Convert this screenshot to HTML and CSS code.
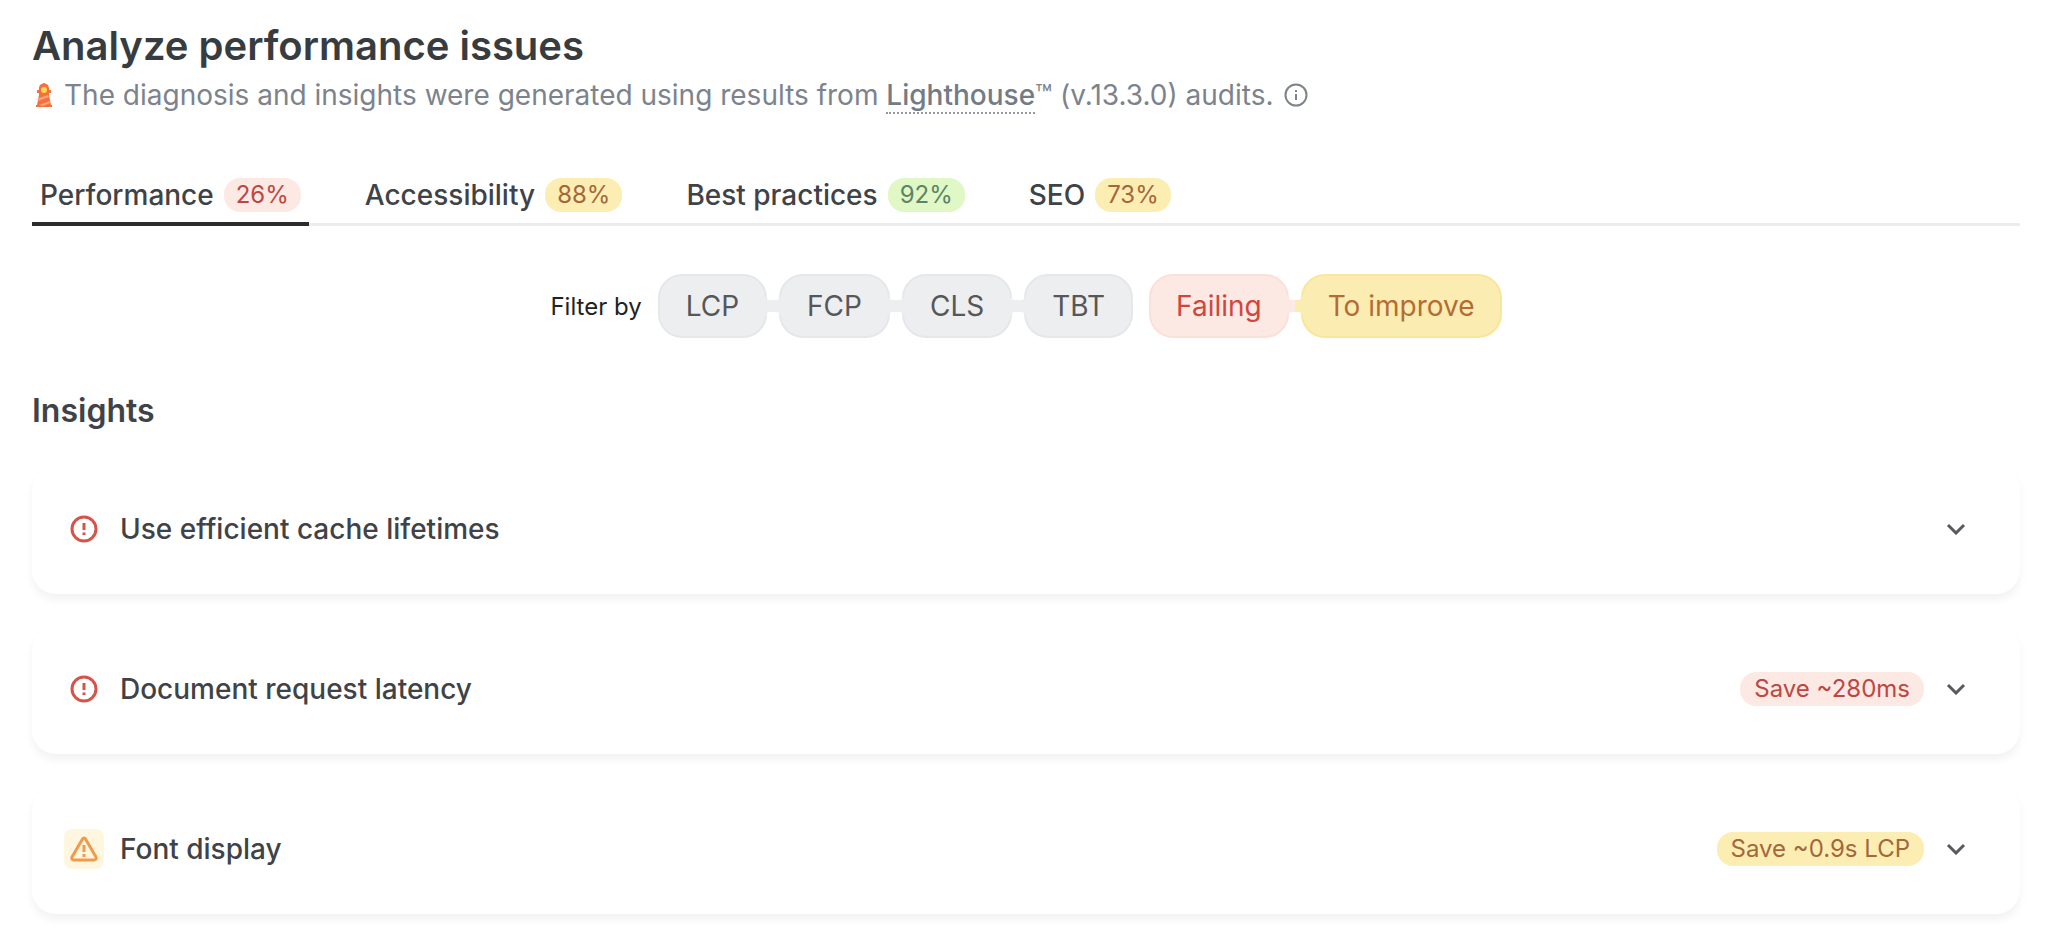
FILE: index.html
```html
<!DOCTYPE html>
<html lang="en">
<head>
  <meta charset="utf-8">
  <meta name="viewport" content="width=device-width, initial-scale=1.0">
  <title>Analyze performance issues</title>
  <link rel="stylesheet" href="styles.css">
</head>
<body>
  <main>
    <h1>Analyze performance issues</h1>
    <div class="intro">
      <svg class="lighthouse" width="20" height="26" viewBox="0 0 18 26" aria-hidden="true">
        <path fill="#f4703d" d="M9 1c4 1 5 3 5 6v1h2v3h-2v2l2 10h1v2H1v-2h1l2-10v-2H2V8h2V7c0-3 1-5 5-6z"/>
        <circle cx="9" cy="8" r="3" fill="#ffd84f"/>
        <path fill="#ffa27c" d="M4 16l9-3 1 2-11 4zM4 23l11-4v2l-7 3z"/>
      </svg>
      <span>The diagnosis and insights were generated using results from <a href="#">Lighthouse</a>™ (v.13.3.0) audits.</span>
      <button class="info" aria-label="More information">
        <svg width="24" height="24" viewBox="0 0 24 24" fill="none" stroke="currentColor" stroke-width="2">
          <circle cx="12" cy="12" r="10.5"/>
          <path d="M12 11v6M12 7v2"/>
        </svg>
      </button>
    </div>

    <div class="tabs" role="tablist">
      <button class="tab active" role="tab" aria-selected="true">Performance <span class="badge red">26%</span></button>
      <button class="tab" role="tab" aria-selected="false">Accessibility <span class="badge yellow">88%</span></button>
      <button class="tab" role="tab" aria-selected="false">Best practices <span class="badge green">92%</span></button>
      <button class="tab" role="tab" aria-selected="false">SEO <span class="badge yellow">73%</span></button>
    </div>

    <div class="filters">
      <span class="filter-label">Filter by</span>
      <div class="chips">
        <button class="chip">LCP</button>
        <svg class="link" width="16" height="22" viewBox="0 0 16 22"><path d="M0 0C1 4 3 5 6 5h4c3 0 5-1 6-5v22c-1-4-3-5-6-5H6c-3 0-5 1-6 5z"/></svg>
        <button class="chip">FCP</button>
        <svg class="link" width="16" height="22" viewBox="0 0 16 22"><path d="M0 0C1 4 3 5 6 5h4c3 0 5-1 6-5v22c-1-4-3-5-6-5H6c-3 0-5 1-6 5z"/></svg>
        <button class="chip">CLS</button>
        <svg class="link" width="16" height="22" viewBox="0 0 16 22"><path d="M0 0C1 4 3 5 6 5h4c3 0 5-1 6-5v22c-1-4-3-5-6-5H6c-3 0-5 1-6 5z"/></svg>
        <button class="chip">TBT</button>
      </div>
      <div class="chips">
        <button class="chip failing">Failing</button>
        <svg class="link" width="16" height="22" viewBox="0 0 16 22">
          <path class="link-failing" d="M0 0C1 4 3 5 6 5h2v12H6c-3 0-5 1-6 5z"/>
          <path class="link-improve" d="M16 0c-1 4-3 5-6 5H8v12h2c3 0 5 1 6 5z"/>
        </svg>
        <button class="chip improve">To improve</button>
      </div>
    </div>

    <h2>Insights</h2>
    <div class="cards">
      <button class="card" aria-expanded="false">
        <span class="status error">
          <svg width="28" height="28" viewBox="0 0 28 28" fill="none" stroke="currentColor" stroke-width="3">
            <circle cx="14" cy="14" r="12"/>
            <path d="M14 8v7M14 17.5v2.5"/>
          </svg>
        </span>
        <span class="name">Use efficient cache lifetimes</span>
        <svg class="chevron" width="20" height="12" viewBox="0 0 20 12"><path d="M2 2l8 8 8-8"/></svg>
      </button>
      <button class="card" aria-expanded="false">
        <span class="status error">
          <svg width="28" height="28" viewBox="0 0 28 28" fill="none" stroke="currentColor" stroke-width="3">
            <circle cx="14" cy="14" r="12"/>
            <path d="M14 8v7M14 17.5v2.5"/>
          </svg>
        </span>
        <span class="name">Document request latency</span>
        <span class="badge save red">Save ~280ms</span>
        <svg class="chevron" width="20" height="12" viewBox="0 0 20 12"><path d="M2 2l8 8 8-8"/></svg>
      </button>
      <button class="card" aria-expanded="false">
        <span class="status warning">
          <svg width="28" height="28" viewBox="0 0 28 28" fill="none" stroke="currentColor" stroke-width="3" stroke-linejoin="round">
            <path d="M12.5 4q1.5-2 3 0L26 22q.8 3-2 3H4q-2.800 0-2-3z"/>
            <path d="M14 10v7M14 19v3"/>
          </svg>
        </span>
        <span class="name">Font display</span>
        <span class="badge save yellow">Save ~0.9s LCP</span>
        <svg class="chevron" width="20" height="12" viewBox="0 0 20 12"><path d="M2 2l8 8 8-8"/></svg>
      </button>
    </div>
  </main>
</body>
</html>
```
FILE: styles.css
```css
* {
  box-sizing: border-box;
}

body {
  margin: 0;
  background: #fff;
  color: #3f4347;
  font-family: Inter, sans-serif;
  font-size: 28px;
}

main {
  padding: 22px 32px 12px;
}

button {
  margin: 0;
  padding: 0;
  border: 0;
  background: none;
  color: inherit;
  font: inherit;
  cursor: pointer;
}

h1 {
  margin: 0;
  font-size: 40px;
  line-height: 48px;
  font-weight: 600;
  color: #373c40;
}

.intro {
  display: flex;
  align-items: center;
  margin-top: 4px;
  line-height: 42px;
  color: #7c838c;
}

.lighthouse {
  margin: 0 10px 0 2px;
}

.intro a {
  color: #737b85;
  font-weight: 500;
  text-decoration: none;
  border-bottom: 2px dotted #9299a1;
}

.info {
  display: flex;
  margin-left: 10px;
}

.tabs {
  display: flex;
  gap: 48px;
  margin-top: 52px;
  border-bottom: 3px solid #ececee;
}

.tab {
  display: flex;
  align-items: center;
  gap: 10px;
  height: 58px;
  margin-bottom: -3px;
  padding: 0 8px;
  border-bottom: 4px solid transparent;
  font-weight: 500;
}

.tab.active {
  border-color: #2c2c2f;
}

.badge {
  padding: 0 12px;
  border-radius: 16px;
  font-size: 24px;
  line-height: 34px;
  font-weight: 400;
}

.red {
  background: #fce9e4;
  color: #bc4742;
}

.yellow {
  background: #fceeb2;
  color: #a3683a;
}

.green {
  background: #dff8c6;
  color: #5d8468;
}

.filters {
  display: flex;
  justify-content: center;
  align-items: center;
  gap: 16px;
  margin-top: 48px;
}

.filter-label {
  font-size: 24px;
  color: #222;
}

.chips {
  display: flex;
  align-items: center;
}

.chip {
  height: 64px;
  padding: 0 26px;
  border: 2px solid #e6e7ea;
  border-radius: 24px;
  background: #edeef0;
  color: #55575a;
}

.chip.failing {
  padding: 0 25px;
  border-color: #fbe0d9;
  background: #fce9e4;
  color: #d0463e;
}

.chip.improve {
  padding: 0 25px;
  border-color: #fae69a;
  background: #fbedb2;
  color: #b46c34;
}

/* bridge between two neighbouring chips */
.link {
  position: relative;
  z-index: 1;
  margin: 0 -2px;
  fill: #edeef0;
}

.link-failing {
  fill: #fce9e4;
}

.link-improve {
  fill: #fbedb2;
}

h2 {
  margin: 53px 0 35px;
  font-size: 32px;
  line-height: 40px;
  font-weight: 600;
}

.cards {
  display: flex;
  flex-direction: column;
  gap: 32px;
}

.card {
  display: flex;
  align-items: center;
  height: 128px;
  padding: 0 54px 2px 32px;
  border-radius: 24px;
  background: #fff;
  box-shadow: 0 6px 8px rgba(0, 0, 0, 0.05);
  font-weight: 500;
  text-align: left;
}

.status {
  display: flex;
  justify-content: center;
  align-items: center;
  width: 40px;
  height: 40px;
  border-radius: 8px;
}

.error {
  color: #d75249;
}

.warning {
  background: #fff6e0;
  color: #f3994b;
}

.name {
  flex: 1;
  margin-left: 16px;
}

.save {
  padding: 0 14px;
}

.chevron {
  margin-left: 22px;
  fill: none;
  stroke: #56595d;
  stroke-width: 3;
}
```
